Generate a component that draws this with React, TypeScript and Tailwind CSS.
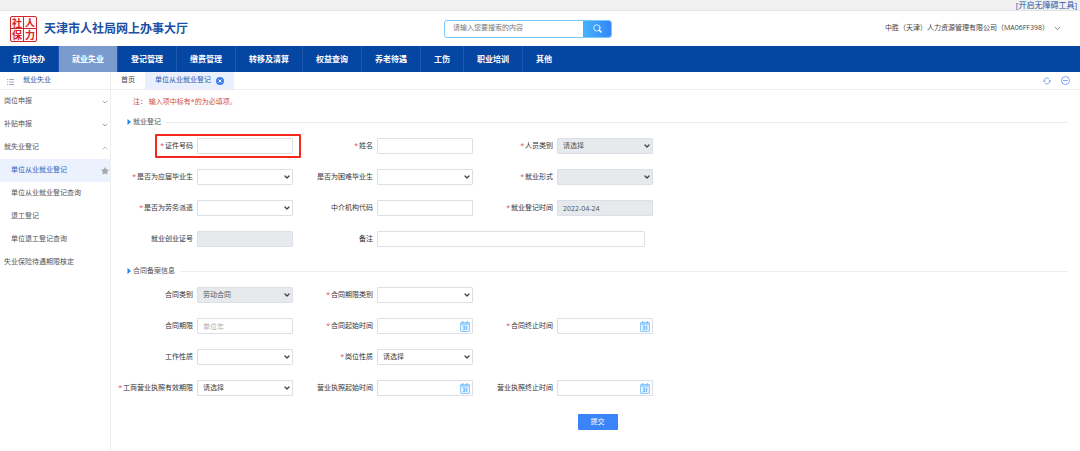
import { useState } from 'react';
import type { ReactNode } from 'react';
import { ChevronDown, ChevronUp, Star } from 'lucide-react';

type FieldProps = {
  id: string;
  label: string;
  required?: boolean;
  wide?: boolean;
  marked?: boolean;
  children: ReactNode;
};

const navItems = ['打包快办', '就业失业', '登记管理', '缴费管理', '转移及清算', '权益查询', '养老待遇', '工伤', '职业培训', '其他'];

const controlClass =
  'block h-4 w-full min-w-0 appearance-none rounded-[1px] border border-[#dcdfe6] px-[5px] text-[7px] leading-[14px] text-[#444] outline-none disabled:bg-[#e6eaed] disabled:text-[#555] disabled:opacity-100';

function Field({ id, label, required, wide, marked, children }: FieldProps) {
  return (
    <div className={wide ? 'relative col-span-2 flex items-center gap-1 pr-2' : 'relative flex items-center gap-1'}>
      <label htmlFor={id} className="w-20 shrink-0 whitespace-nowrap text-right text-[7px] leading-4 text-[#333]">
        {required && <span className="mr-px text-[#e05050]">*</span>}
        {label}
      </label>
      <div className="relative min-w-0 flex-1">{children}</div>
      {marked && (
        <div className="pointer-events-none absolute -top-1 -right-2 -bottom-1 left-[42px] rounded-[1px] border-2 border-[#f5281e]" />
      )}
    </div>
  );
}

function TextInput({ id, disabled, value, placeholder }: { id: string; disabled?: boolean; value?: string; placeholder?: string }) {
  return (
    <input
      id={id}
      type="text"
      disabled={disabled}
      defaultValue={value}
      placeholder={placeholder}
      className={`${controlClass} placeholder:text-[#b0b0b0]`}
    />
  );
}

function Select({ id, disabled, value = '' }: { id: string; disabled?: boolean; value?: string }) {
  return (
    <>
      <select id={id} disabled={disabled} className={controlClass}>
        <option>{value}</option>
      </select>
      <ChevronDown
        className="pointer-events-none absolute top-1 right-[2px] h-2 w-2 text-[#444]"
        strokeWidth={4}
      />
    </>
  );
}

function DateInput({ id }: { id: string }) {
  return (
    <>
      <input id={id} type="text" className={controlClass} />
      <svg viewBox="0 0 10 11" className="pointer-events-none absolute top-[3px] right-[3px] h-[11px] w-[10px]">
        <rect x="0.5" y="1.5" width="9" height="9" rx="0.5" fill="#e4f3ff" stroke="#8ccbfc" />
        <path d="M0.5 3h9" stroke="#8ccbfc" strokeWidth="1.4" />
        <path d="M2.8 0v2.4M7.2 0v2.4" stroke="#6fbafa" strokeWidth="1" />
        <path d="M2.8 5h2v3.6h-2M3.2 6.8h1.6M6.7 4.6v4.4" fill="none" stroke="#5fb0f7" strokeWidth="0.9" />
      </svg>
    </>
  );
}

function SectionTitle({ children }: { children: ReactNode }) {
  return (
    <div className="flex h-4 items-center pr-3 pl-4">
      <svg viewBox="0 0 4 6" className="h-[6px] w-1">
        <path d="M0.5 0L4 3L0.5 6z" fill="#1e88f0" />
      </svg>
      <h2 className="ml-[2px] text-[7px] leading-4 text-[#555]">{children}</h2>
      <div className="ml-[5px] h-px flex-1 bg-[#ececec]" />
    </div>
  );
}

// Red seal: four characters divided by a thin cross
function Logo() {
  return (
    <div className="grid h-[26px] w-[27px] grid-cols-2 grid-rows-2 overflow-hidden rounded-[2px] border border-[#d3262b] bg-[#d3262b] gap-px font-['Noto_Sans_CJK_SC',sans-serif] text-[10px] leading-[11px] font-bold text-[#d3262b]">
      {['社', '人', '保', '力'].map((char) => (
        <span key={char} className="flex items-center justify-center bg-[#fff6f5]">{char}</span>
      ))}
    </div>
  );
}

function Sidebar() {
  const [open, setOpen] = useState(true);

  return (
    <aside className="w-[111px] shrink-0 border-r border-[#eeeeee] text-[7px] text-[#555]">
      <div className="flex h-[18px] items-center gap-[9px] border-b border-[#eeeeee] pl-[7px] text-[#2d5a9e]">
        <svg viewBox="0 0 7 8" className="mt-[2px] h-2 w-[7px]" stroke="#7d8fab" strokeWidth="0.8">
          <path d="M0 1.5h1.2M2.2 1.5H7M0 4h1.2M2.2 4H7M0 6.5h1.2M2.2 6.5H7" />
        </svg>
        就业失业
      </div>
      <nav>
        <button type="button" className="flex h-[23px] w-full items-center justify-between pr-px pl-1">
          岗位申报
          <ChevronDown className="h-2 w-2 text-[#777]" />
        </button>
        <button type="button" className="flex h-[23px] w-full items-center justify-between pr-px pl-1">
          补贴申报
          <ChevronDown className="h-2 w-2 text-[#777]" />
        </button>
        <button
          type="button"
          onClick={() => setOpen(!open)}
          className="flex h-[23px] w-full items-center justify-between pr-px pl-1"
        >
          就失业登记
          {open ? <ChevronUp className="h-2 w-2 text-[#999]" /> : <ChevronDown className="h-2 w-2 text-[#777]" />}
        </button>
        {open && (
          <>
            <a href="#register" className="flex h-[23px] items-center justify-between bg-[#ebf1fd] pr-px pl-[11px] text-[#2f63c0]">
              单位从业就业登记
              <Star className="h-2 w-2 text-[#a8a8a8]" fill="currentColor" />
            </a>
            <a href="#register-query" className="flex h-[23px] items-center pl-[11px]">单位从业就业登记查询</a>
            <a href="#quit" className="flex h-[23px] items-center pl-[11px]">退工登记</a>
            <a href="#quit-query" className="flex h-[23px] items-center pl-[11px]">单位退工登记查询</a>
          </>
        )}
        <a href="#insurance" className="flex h-[23px] items-center pl-1">失业保险待遇期限核定</a>
      </nav>
    </aside>
  );
}

export default function App() {
  const [activeNav, setActiveNav] = useState('就业失业');

  return (
    <div className="min-h-screen bg-white font-['Open_Sans','Noto_Sans_CJK_SC',sans-serif]">
      <div className="flex h-[11px] items-start justify-end border-b border-[#e4e4e4] bg-[#f0f0f0] pr-[3px]">
        <a href="#accessible" className="block text-[8px] leading-[10px] text-[#1f56a8]">[开启无障碍工具]</a>
      </div>

      <header className="flex h-[35px] items-center justify-between pr-[18px] pl-[10px]">
        <div className="flex w-[434px] items-center gap-[7px]">
          <Logo />
          <h1 className="text-[12px] leading-4 font-bold text-[#1c4fa5]">天津市人社局网上办事大厅</h1>
        </div>
        <form
          className="flex h-[18px] w-[168px] overflow-hidden rounded-[3px] border border-[#7cc8fb]"
          onSubmit={(e) => e.preventDefault()}
        >
          <input
            type="text"
            aria-label="搜索"
            placeholder="请输入您要搜索的内容"
            className="min-w-0 flex-1 px-2 text-[7px] outline-none placeholder:text-[#777]"
          />
          <button
            type="submit"
            aria-label="搜索"
            className="flex w-7 items-center justify-center bg-gradient-to-r from-[#46b4fc] to-[#3585f8]"
          >
            <svg viewBox="0 0 9 9" className="h-[9px] w-[9px]" fill="none" stroke="#fff" strokeLinecap="round">
              <circle cx="3.9" cy="3.9" r="3.2" strokeWidth="0.8" />
              <path d="M6.4 6.2L8 8" strokeWidth="1.5" />
            </svg>
          </button>
        </form>
        <button type="button" className="ml-auto flex items-center gap-1 text-[7px] text-[#444]">
          中胜（天津）人力资源管理有限公司（MA06FF398）
          <ChevronDown className="h-[9px] w-[9px] text-[#555]" />
        </button>
      </header>

      <nav className="flex h-[26px] bg-[#0646a3]">
        {navItems.map((item) => (
          <button
            key={item}
            type="button"
            onClick={() => setActiveNav(item)}
            className={`border-r border-[#1d58ae] px-[13px] text-[8px] font-bold whitespace-nowrap text-white last:border-r-0 ${
              item === activeNav ? 'bg-[#7a9bce]' : ''
            }`}
          >
            {item}
          </button>
        ))}
      </nav>

      <div className="flex">
        <Sidebar />
        <main className="min-w-0 flex-1 pb-5">
          <div className="flex h-[18px] items-stretch border-b border-[#eeeeee] text-[7px]">
            <button type="button" className="px-[10px] text-[#444]">首页</button>
            <div className="flex items-center gap-[5px] bg-[#e9effd] px-[10px] text-[#2a5cb0]">
              单位从业就业登记
              <button type="button" aria-label="关闭">
                <svg viewBox="0 0 8 8" className="h-2 w-2">
                  <circle cx="4" cy="4" r="4" fill="#3f7fee" />
                  <path d="M2.6 2.6l2.8 2.8M5.4 2.6l-2.8 2.8" stroke="#fff" strokeWidth="1" />
                </svg>
              </button>
            </div>
            <div className="ml-auto flex items-center gap-[10px] pr-[10px]">
              <button type="button" aria-label="刷新">
                <svg viewBox="0 0 8 8" className="h-2 w-2" fill="none" stroke="#6f95f5" strokeWidth="0.9">
                  <path d="M1.2 4.6A2.8 2.8 0 0 1 6 2M6.8 3.4A2.8 2.8 0 0 1 2 6" />
                  <path d="M0.2 3.6l1 1.2l1.2-1M5.6 4.2l1.2-1l1 1.2" />
                </svg>
              </button>
              <button type="button" aria-label="收起">
                <svg viewBox="0 0 9 9" className="h-[9px] w-[9px]" fill="none" stroke="#6f95f5" strokeWidth="0.9">
                  <circle cx="4.5" cy="4.5" r="4" />
                  <path d="M2.2 4.5h4.6" />
                </svg>
              </button>
            </div>
          </div>

          <form onSubmit={(e) => e.preventDefault()}>
            <p className="mt-1 pl-[22px] text-[7px] leading-4 text-[#d24a4a]">注： 输入项中标有*的为必填项。</p>

            <div className="mt-1">
              <SectionTitle>就业登记</SectionTitle>
            </div>
            <div className="mt-2 ml-[2px] grid max-w-[540px] grid-cols-3 gap-y-[15px]">
              <Field id="idNo" label="证件号码" required marked><TextInput id="idNo" /></Field>
              <Field id="name" label="姓名" required><TextInput id="name" /></Field>
              <Field id="personType" label="人员类别" required><Select id="personType" value="请选择" disabled /></Field>

              <Field id="graduate" label="是否为应届毕业生" required><Select id="graduate" /></Field>
              <Field id="hardship" label="是否为困难毕业生"><Select id="hardship" /></Field>
              <Field id="jobForm" label="就业形式" required><Select id="jobForm" disabled /></Field>

              <Field id="dispatch" label="是否为劳务派遣" required><Select id="dispatch" /></Field>
              <Field id="agency" label="中介机构代码"><TextInput id="agency" /></Field>
              <Field id="regDate" label="就业登记时间" required><TextInput id="regDate" value="2022-04-24" disabled /></Field>

              <Field id="certNo" label="就业创业证号"><TextInput id="certNo" disabled /></Field>
              <Field id="remark" label="备注" wide><TextInput id="remark" /></Field>
            </div>

            <div className="mt-4">
              <SectionTitle>合同备案信息</SectionTitle>
            </div>
            <div className="mt-2 ml-[2px] grid max-w-[540px] grid-cols-3 gap-y-[15px]">
              <Field id="contractType" label="合同类别"><Select id="contractType" value="劳动合同" disabled /></Field>
              <Field id="termType" label="合同期限类别" required><Select id="termType" /></Field>
              <div />

              <Field id="term" label="合同期限"><TextInput id="term" placeholder="单位年" /></Field>
              <Field id="contractStart" label="合同起始时间" required><DateInput id="contractStart" /></Field>
              <Field id="contractEnd" label="合同终止时间" required><DateInput id="contractEnd" /></Field>

              <Field id="workKind" label="工作性质"><Select id="workKind" /></Field>
              <Field id="postKind" label="岗位性质" required><Select id="postKind" value="请选择" /></Field>
              <div />

              <Field id="licenseTerm" label="工商营业执照有效期限" required><Select id="licenseTerm" value="请选择" /></Field>
              <Field id="licenseStart" label="营业执照起始时间"><DateInput id="licenseStart" /></Field>
              <Field id="licenseEnd" label="营业执照终止时间"><DateInput id="licenseEnd" /></Field>
            </div>

            <div className="mt-[18px] flex justify-center pl-1">
              <button type="submit" className="h-4 w-10 rounded-[1px] bg-[#3a84f7] text-[7px] text-white">
                提交
              </button>
            </div>
          </form>
        </main>
      </div>
    </div>
  );
}
